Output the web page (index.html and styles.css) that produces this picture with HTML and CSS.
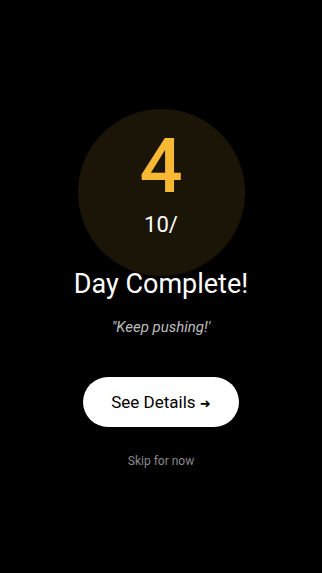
FILE: index.html
```html
<!DOCTYPE html>
<html lang="en">
<head>
    <meta charset="UTF-8">
    <meta name="viewport" content="width=device-width, initial-scale=1.0">
    <title>Day Complete</title>
    <link rel="stylesheet" href="styles.css">
</head>
<body>

    <div class="screen">
        <div class="badge">
            <div class="day-number">4</div>
            <div class="day-total">10/</div>
        </div>
        <h1 class="title">Day Complete!</h1>
        <p class="quote">"Keep pushing!'</p>
        <button type="button" class="details-btn">See Details <span class="arrow">&#10140;</span></button>
        <a href="#" class="skip">Skip for now</a>
    </div>

</body>
</html>
```

FILE: styles.css
```css
body {
    margin: 0;
    padding: 0;
    background-color: #000;
    font-family: Roboto, "Noto Sans", sans-serif;
    color: #fff;
}
.screen {
    height: 573px;
    display: flex;
    flex-direction: column;
    align-items: center;
    padding-top: 109px;
    box-sizing: border-box;
}
.badge {
    width: 167px;
    height: 167px;
    border-radius: 50%;
    background-color: #1a1506;
    display: flex;
    flex-direction: column;
    align-items: center;
    box-sizing: border-box;
    padding-top: 15px;
}
.day-number {
    font-size: 76px;
    line-height: 84px;
    color: #f7b934;
    font-weight: 500;
}
.day-total {
    font-size: 22px;
    line-height: 28px;
    margin-top: 3px;
}
.title {
    margin: -10px 0 0;
    font-size: 27px;
    font-weight: 400;
    line-height: 36px;
}
.quote {
    margin: 16px 0 0;
    font-size: 15px;
    font-style: italic;
    color: #bdbdbd;
}
.details-btn {
    margin-top: 41px;
    width: 156px;
    height: 50px;
    border: none;
    border-radius: 25px;
    background-color: #fff;
    color: #000;
    font-family: inherit;
    font-size: 17px;
    font-weight: 400;
}
.details-btn .arrow {
    font-family: "DejaVu Sans", sans-serif;
    font-size: 13px;
}
.skip {
    margin-top: 27px;
    font-size: 12px;
    color: #8a8a8a;
    text-decoration: none;
}
```
